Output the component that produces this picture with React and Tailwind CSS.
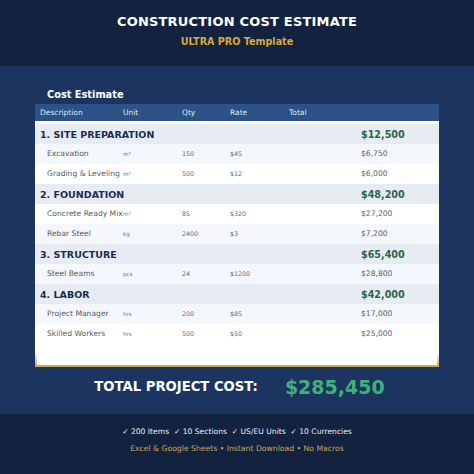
import React from "react";

const sections = [
  {
    title: "1. SITE PREPARATION",
    total: "$12,500",
    items: [
      { name: "Excavation", unit: "m³", qty: "150", rate: "$45", total: "$6,750", light: true },
      { name: "Grading & Leveling", unit: "m²", qty: "500", rate: "$12", total: "$6,000", light: false },
    ],
  },
  {
    title: "2. FOUNDATION",
    total: "$48,200",
    items: [
      { name: "Concrete Ready Mix", unit: "m³", qty: "85", rate: "$320", total: "$27,200", light: false },
      { name: "Rebar Steel", unit: "kg", qty: "2400", rate: "$3", total: "$7,200", light: true },
    ],
  },
  {
    title: "3. STRUCTURE",
    total: "$65,400",
    items: [
      { name: "Steel Beams", unit: "pcs", qty: "24", rate: "$1200", total: "$28,800", light: true },
    ],
  },
  {
    title: "4. LABOR",
    total: "$42,000",
    items: [
      { name: "Project Manager", unit: "hrs", qty: "200", rate: "$85", total: "$17,000", light: true },
      { name: "Skilled Workers", unit: "hrs", qty: "500", rate: "$50", total: "$25,000", light: false },
    ],
  },
];

export default function App() {
  return (
    <div
      className="w-[474px] h-[474px] flex flex-col overflow-hidden"
      style={{ fontFamily: '"DejaVu Sans", Verdana, sans-serif' }}
    >
      {/* Header */}
      <div className="h-[66px] bg-[#13233f] flex flex-col items-center pt-[13px]">
        <div className="text-white font-bold text-[13px] leading-[17px] tracking-[0.2px]">
          CONSTRUCTION COST ESTIMATE
        </div>
        <div className="text-[#d8a93c] font-bold text-[9.6px] leading-[12px] mt-[6px]">
          ULTRA PRO Template
        </div>
      </div>

      {/* Main */}
      <div className="flex-1 bg-[#1c3560] flex flex-col px-[35px] pt-[22px]">
        <div className="text-white font-bold text-[9.8px] leading-[13px] pl-[12px]">Cost Estimate</div>
        <div className="mt-[3px] w-[404px]">
          <div className="h-[17px] bg-[#2c5288] flex items-center text-[#dfe7f2] text-[7.5px]">
            <div className="w-[88px] pl-[5px]">Description</div>
            <div className="w-[59px]">Unit</div>
            <div className="w-[48px]">Qty</div>
            <div className="w-[59px]">Rate</div>
            <div>Total</div>
          </div>
          <div className="bg-white pt-[3px] border-b-2 border-[#c9a556]">
            {sections.map((s) => (
              <div key={s.title}>
                <div className="h-[20px] pt-[2px] bg-[#e7ecf3] flex items-center">
                  <div className="w-[326px] pl-[5px] text-[#1b2d4f] font-bold text-[9.5px]">{s.title}</div>
                  <div className="text-[#2a6546] font-bold text-[9.6px]">{s.total}</div>
                </div>
                {s.items.map((it) => (
                  <div
                    key={it.name}
                    className={`h-[20px] flex items-center ${it.light ? "bg-[#f4f7fb]" : "bg-white"}`}
                  >
                    <div className="w-[88px] pl-[12px] text-[#555a62] text-[7.6px] whitespace-nowrap">{it.name}</div>
                    <div className="w-[59px] text-[#6b7787] text-[5.6px]">{it.unit}</div>
                    <div className="w-[48px] text-[#4a6e97] text-[6.3px]">{it.qty}</div>
                    <div className="w-[131px] text-[#4a6e97] text-[6.3px]">{it.rate}</div>
                    <div className="text-[#5a5f66] text-[7.6px]">{it.total}</div>
                  </div>
                ))}
              </div>
            ))}
            <div className="h-[21px] border-x-2 border-[#c9a556] [border-image:linear-gradient(to_bottom,transparent_40%,#c9a556)_1]" />
          </div>
        </div>
        <div className="flex items-center justify-center gap-[27px] mt-[6px] pl-[5px]">
          <div className="text-white font-bold text-[13.2px]">TOTAL PROJECT COST:</div>
          <div className="text-[#3eb079] font-bold text-[19px]">$285,450</div>
        </div>
      </div>

      {/* Footer */}
      <div className="h-[60px] bg-[#13233f] flex flex-col items-center pt-[12px]">
        <div className="text-[#e8edf4] text-[7.6px] leading-[12px]">
          ✓ 200 Items&nbsp; ✓ 10 Sections&nbsp; ✓ US/EU Units&nbsp; ✓ 10 Currencies
        </div>
        <div className="text-[#c9a55e] text-[7.7px] leading-[12px] mt-[5px]">
          Excel &amp; Google Sheets • Instant Download • No Macros
        </div>
      </div>
    </div>
  );
}
